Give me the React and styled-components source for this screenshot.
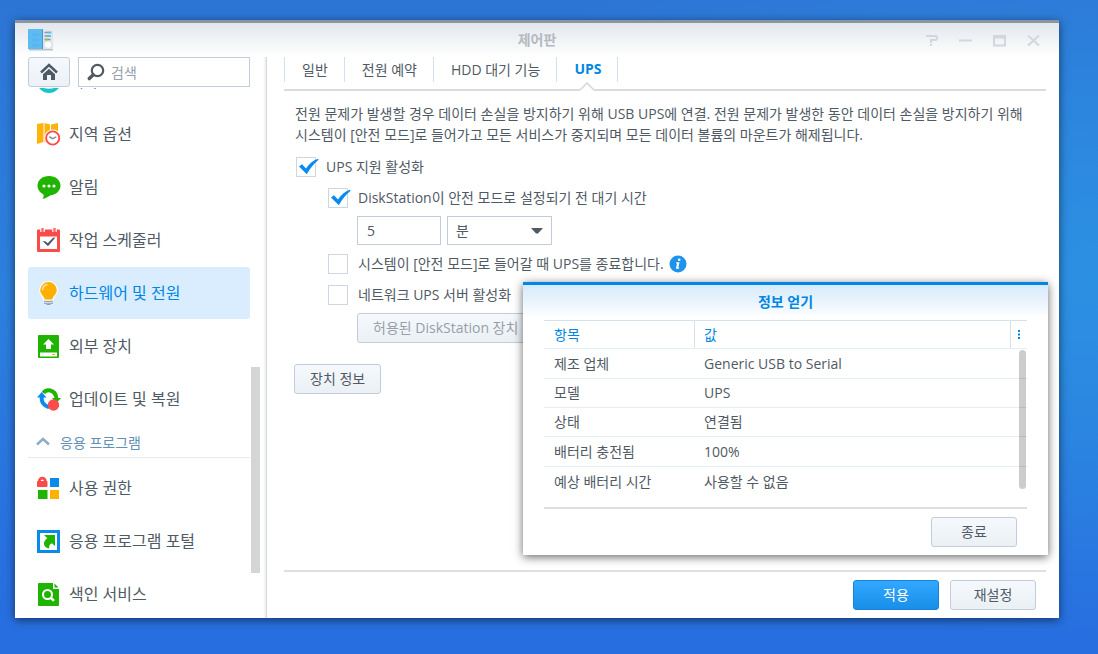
import React from 'react'
import styled, { createGlobalStyle, ThemeProvider } from 'styled-components'

const theme = {
	text: '#505a64',
	muted: '#96a0aa',
	blue: '#0086e5',
	line: '#d7e1eb',
	border: '#c3cdd9',
	font: "'Open Sans', 'Noto Sans CJK KR', sans-serif",
}

const GlobalStyle = createGlobalStyle`
	* {
		box-sizing: border-box;
	}
	body {
		margin: 0;
	}
	body, button, input, select {
		font-family: ${props => props.theme.font};
		font-size: 14px;
		color: ${props => props.theme.text};
	}
`

/* icons */

const AppIcon = () => (
	<svg width="26" height="22" viewBox="0 0 26 22" aria-hidden="true">
		<rect x="1" y="1" width="24" height="20" fill="#dfe5ea" />
		<rect x="1" y="20" width="24" height="1.500" fill="#b9c4ce" />
		<rect x="0" y="0" width="15" height="20" fill="#5fbaf0" />
		<rect x="14" y="0" width="1" height="20" fill="#3d9ad6" />
		<path d="M2 6h9M2 11h9M2 16h9" stroke="#46b4f5" strokeWidth="1" />
		<path d="M2 6h2M2 11h2M2 16h2" stroke="#4fd4f7" strokeWidth="1" />
		<path d="M16.500 3.500h6M16.500 7h6M16.500 10.500h6" stroke="#8b98a3" strokeWidth="1.600" />
		<path d="M19.500 3.500h4M19 7h4" stroke="#4cc4f0" strokeWidth="1.600" />
		<path d="M17 10.500h3" stroke="#8cc63c" strokeWidth="1.600" />
		<circle cx="20" cy="15.700" r="3" fill="#fff" />
	</svg>
)

const HomeIcon = () => (
	<svg width="18" height="18" viewBox="0 0 18 18" aria-hidden="true">
		<path d="M1 9.500 9 2l8 7.500" fill="none" stroke="#505a64" strokeWidth="2.400" />
		<path d="M3 11.300 9 5.800l6 5.500V17h-4v-5H7v5H3z" fill="#505a64" />
	</svg>
)

const SearchIcon = () => (
	<svg width="18" height="18" viewBox="0 0 18 18" aria-hidden="true">
		<circle cx="10.500" cy="7.500" r="5.700" fill="none" stroke="#505a64" strokeWidth="2.200" />
		<path d="M6.300 11.800 2.300 15.600" stroke="#505a64" strokeWidth="3.400" strokeLinecap="round" />
	</svg>
)

const CheckMark = () => (
	<svg width="22" height="18" viewBox="0 0 22 18" aria-hidden="true">
		<path d="M1 8.500 4 6.200 8 10.500C11 6 15 2.500 20 .8l.6 1C16 5.500 12.500 10 8.800 16.200z" fill="#0a8af0" />
	</svg>
)

const ThemeIcon = () => (
	<svg width="24" height="24" viewBox="0 0 24 24" aria-hidden="true">
		<circle cx="12" cy="12" r="12" fill="#1fc8c8" />
		<path d="M3 17q9 6 18 0l-2-5H5z" fill="#b5eef0" />
		<path d="M2 18q10 5 20 0a12 12 0 0 1-20 0z" fill="#1cc4c4" />
	</svg>
)

const RegionIcon = () => (
	<svg width="24" height="24" viewBox="0 0 24 24" aria-hidden="true">
		<path d="M0 2 6.500 1v19L0 22zM7.500 1 13 2.500v19L7.500 20zM14 2.500 21 1v19l-7 1.500z" fill="#ffb30a" />
		<circle cx="15.700" cy="16" r="8.500" fill="#fff" />
		<circle cx="15.700" cy="16" r="6.600" fill="#fff" stroke="#ff4b4b" strokeWidth="1.900" />
		<path d="m12.300 14.700 3.400 2 3.600-1.800" fill="none" stroke="#8a939c" strokeWidth="1.600" />
	</svg>
)

const BubbleIcon = () => (
	<svg width="24" height="24" viewBox="0 0 24 24" aria-hidden="true">
		<path d="M12 1c6.600 0 11.500 4.200 11.500 9.600S19 20 13.500 20.300C11 22 8.500 23.500 5.500 24c1-1.500 1.300-3 1-4.600C3 17.800.5 14.800.5 10.600.5 5.200 5.400 1 12 1z" fill="#1fb400" />
		<circle cx="7" cy="11" r="1.600" fill="#fff" />
		<circle cx="12" cy="11" r="1.600" fill="#fff" />
		<circle cx="17" cy="11" r="1.600" fill="#fff" />
	</svg>
)

const CalendarIcon = () => (
	<svg width="24" height="24" viewBox="0 0 24 24" aria-hidden="true">
		<rect x="0" y="1.500" width="23" height="22.500" rx="1" fill="#fa4b4b" />
		<rect x="3" y="8.500" width="17" height="12.500" fill="#fff" />
		<path d="M5.500 0v4M17.500 0v4" stroke="#fff" strokeWidth="4.500" />
		<path d="M5.500 0v4M17.500 0v4" stroke="#fa6b6b" strokeWidth="2.400" />
		<path d="m5.500 13 3.400.6 1.800 1.700L16 9.800l2.500-.3-7.500 8.800z" fill="#505a64" />
	</svg>
)

const BulbIcon = () => (
	<svg width="24" height="24" viewBox="0 0 24 24" aria-hidden="true">
		<path d="M11.500 0a9.300 9.300 0 0 0-9.300 9.300c0 4 3.500 6 4.500 10.700h9.600c1-4.700 4.500-6.700 4.500-10.700A9.300 9.300 0 0 0 11.500 0z" fill="#fff" />
		<path d="M11.500 1a8.300 8.300 0 0 0-8.300 8.300c0 4 3.700 5.500 4.500 9.200h7.600c.8-3.700 4.500-5.200 4.500-9.200A8.300 8.300 0 0 0 11.500 1z" fill="#ffb000" />
		<path d="M5.500 9.200a6 6 0 0 1 5-5.800" fill="none" stroke="#ffe3a0" strokeWidth="1.500" />
		<path d="M7 20.300h9M7 22.200h9" stroke="#8e979f" strokeWidth="1.100" />
		<path d="M9.500 23.600h4" stroke="#8e979f" />
	</svg>
)

const ExternalIcon = () => (
	<svg width="24" height="24" viewBox="0 0 24 24" aria-hidden="true">
		<rect x="1" y="1" width="21" height="23" rx="1" fill="#1fb400" />
		<path d="M11.500 5 17 10.500h-3V15H9v-4.500H6z" fill="#fff" />
		<rect x="3" y="18.500" width="17" height="4" fill="#fff" />
		<path d="M15 20.500h3" stroke="#ffb000" />
	</svg>
)

const UpdateIcon = () => (
	<svg width="24" height="24" viewBox="0 0 24 24" aria-hidden="true">
		<path d="M6.500 6C9 1.700 18 2 19.500 11" fill="none" stroke="#1fb400" strokeWidth="4" />
		<path d="M15 11h9l-4.500 5z" fill="#1fb400" />
		<path d="M4.800 9C4 15 7 19 12 20.200" fill="none" stroke="#0a8aeb" strokeWidth="4" />
		<path d="M0 10.500 4.800 5l4.700 5.500z" fill="#0a8aeb" />
		<circle cx="16.500" cy="18" r="5.700" fill="#ff4b4b" />
	</svg>
)

const PrivilegeIcon = () => (
	<svg width="24" height="24" viewBox="0 0 24 24" aria-hidden="true">
		<rect x="0" y="5" width="10.500" height="6" rx="1" fill="#fa4b4b" />
		<path d="M2.300 7V5.200a3 3 0 0 1 6 0V7" fill="none" stroke="#fa4b4b" strokeWidth="2.800" />
		<rect x="13" y="2" width="9" height="9" fill="#0a8aeb" />
		<rect x="1" y="14" width="9.500" height="9" fill="#1fb400" />
		<rect x="13" y="14" width="9" height="9" fill="#ffb000" />
	</svg>
)

const PortalIcon = () => (
	<svg width="24" height="24" viewBox="0 0 24 24" aria-hidden="true">
		<rect x="1.500" y="2.500" width="20" height="20" fill="#fff" stroke="#0a8aeb" strokeWidth="3" />
		<path d="M7 6h11v11l-3.200-2.800c-2.300 1-2.900 2.900-2.600 5.300C7 18.800 4.500 13.500 10.300 9.300z" fill="#1fb400" />
	</svg>
)

const IndexIcon = () => (
	<svg width="24" height="24" viewBox="0 0 24 24" aria-hidden="true">
		<path d="M1 2a1 1 0 0 1 1-1h14v6h6v16a1 1 0 0 1-1 1H2a1 1 0 0 1-1-1z" fill="#1fb400" />
		<path d="m17.500 1.500 4 4h-4z" fill="#1fb400" />
		<circle cx="10.500" cy="12.500" r="4.500" fill="none" stroke="#fff" strokeWidth="2" />
		<path d="m13.500 15.500 3.500 3.300" stroke="#fff" strokeWidth="2.500" />
	</svg>
)

const ChevronUp = () => (
	<svg width="14" height="9" viewBox="0 0 14 9" aria-hidden="true">
		<path d="M1 7.500 7 2l6 5.500" fill="none" stroke="#8fabc3" strokeWidth="2.400" />
	</svg>
)

const InfoIcon = () => (
	<svg width="18" height="18" viewBox="0 0 18 18" role="img" aria-label="정보">
		<circle cx="9" cy="9" r="8.500" fill="#1f93ea" />
		<path d="M7.300 7.200h3.200L9.300 12.400h1l-.3 1.300H6.900l1.100-5.200h-.9z" fill="#fff" />
		<circle cx="10.200" cy="4.800" r="1.300" fill="#fff" />
	</svg>
)

const windowIcons = {
	'도움말': <path d="M1 2h9.500q1.500 0 1.500 1.500v1q0 1.500-1.500 1.500H6v3M6 10v2" />,
	'최소화': <path d="M0 6.500h13" />,
	'최대화': <path d="M1 2h11v9.500H1zM1 3.500h11" />,
	'닫기': <path d="m1 1.500 11 10M12 1.500l-11 10" />,
}

/* window frame */

const Desktop = styled.div`
	display: flex;
	min-height: 100vh;
	padding: 20px 39px 36px 15px;
	background:
		radial-gradient(ellipse 70% 55% at 100% 42%, #2c90e2 0%, rgba(44, 144, 226, 0) 100%),
		linear-gradient(#2d75d5 0%, #2c80de 45%, #2870e0 85%, #276fe0 100%);
`

const Window = styled.div`
	position: relative;
	flex: 1;
	display: flex;
	flex-direction: column;
	background: #fff;
	border-top: 3px solid #8a95a1;
	box-shadow: 0 2px 9px rgba(0, 0, 0, 0.55);
`

const TitleBar = styled.header`
	display: grid;
	grid-template-columns: 1fr auto 1fr;
	align-items: center;
	height: 34px;
	padding: 0 13px;
	background: linear-gradient(#e2e7ed, #fff);
	svg {
		display: block;
	}
`

const WindowTitle = styled.h1`
	margin: 0;
	font-size: 14px;
	line-height: 20px;
	font-weight: bold;
	color: #b4bac2;
`

const WindowButtons = styled.div`
	display: flex;
	justify-content: flex-end;
	gap: 20px;
	padding-right: 5px;
`

const IconButton = styled.button`
	padding: 0;
	border: 0;
	background: none;
	svg {
		fill: none;
		stroke: #d3d7dc;
		stroke-width: 2;
	}
`

const Body = styled.div`
	flex: 1;
	display: flex;
	min-height: 0;
`

/* sidebar */

const Sidebar = styled.aside`
	display: flex;
	flex-direction: column;
	flex: none;
	width: 252px;
	padding-left: 13px;
	border-right: 1px solid #d5d8dc;
	box-shadow: inset -3px 0 3px -2px #e4e6e9;
`

const SearchRow = styled.div`
	display: flex;
	gap: 8px;
	padding-right: 16px;
`

const HomeButton = styled.button`
	flex: none;
	display: flex;
	align-items: center;
	justify-content: center;
	width: 42px;
	height: 30px;
	padding: 0;
	border: 1px solid ${props => props.theme.border};
	border-radius: 3px;
	background: linear-gradient(#f5f9fd, #ebf1f6);
`

const SearchBox = styled.label`
	flex: 1;
	display: flex;
	align-items: center;
	gap: 6px;
	min-width: 0;
	height: 30px;
	padding: 0 8px;
	border: 1px solid ${props => props.theme.border};
	svg {
		flex: none;
	}
	input {
		flex: 1;
		min-width: 0;
		padding: 0;
		border: 0;
		outline: 0;
		background: none;
	}
	input::placeholder {
		color: ${props => props.theme.muted};
		opacity: 1;
	}
`

const ScrollArea = styled.div`
	position: relative;
	flex: 1;
	display: flex;
	min-height: 0;
	margin-top: 1px;
	padding-right: 6px;
	overflow: hidden;
`

const NavList = styled.nav`
	position: absolute;
	inset: 0 16px -2px 0;
	display: flex;
	flex-direction: column;
	justify-content: flex-end;
	gap: 1px;
`

const NavItem = styled.a`
	flex: none;
	display: flex;
	align-items: center;
	gap: 8px;
	height: 52px;
	padding-left: 9px;
	border-radius: 3px;
	font-size: 16px;
	line-height: 24px;
	text-decoration: none;
	color: ${props => (props.$active ? props.theme.blue : props.theme.text)};
	background: ${props => (props.$active ? '#d9edff' : 'none')};
`

const NavSection = styled.button`
	flex: none;
	display: flex;
	align-items: center;
	gap: 10px;
	height: 32px;
	margin-bottom: 3px;
	padding: 0 0 0 8px;
	border: 0;
	border-bottom: 1px solid #e6eaee;
	background: none;
	color: #6391b5;
`

const SideTrack = styled.div`
	display: flex;
	flex-direction: column;
	justify-content: flex-end;
	width: 9px;
	margin-left: auto;
	padding-bottom: 45px;
`

const SideThumb = styled.div`
	height: 206px;
	background: #d3d5d7;
`

/* main panel */

const Main = styled.main`
	flex: 1;
	display: flex;
	flex-direction: column;
	min-width: 0;
	padding: 0 13px 0 17px;
`

const Tabs = styled.nav`
	display: flex;
	height: 34px;
	padding-bottom: 7px;
	border-bottom: 2px solid #d9dbdd;
`

const Tab = styled.button`
	position: relative;
	padding: 0 16px 2px 17px;
	border: 0;
	border-left: 1px solid ${props => props.theme.line};
	background: none;
	font-weight: ${props => (props.$active ? 'bold' : 'normal')};
	color: ${props => (props.$active ? props.theme.blue : props.theme.text)};
	&:last-of-type {
		border-right: 1px solid ${props => props.theme.line};
	}
	svg {
		position: absolute;
		left: 50%;
		bottom: -9px;
		margin-left: -7px;
	}
`

const Content = styled.div`
	flex: 1;
	padding: 12px 10px 0;
`

const Description = styled.p`
	margin: 0;
	padding-left: 1px;
	line-height: 21px;
	word-break: keep-all;
`

const Options = styled.div`
	display: flex;
	flex-direction: column;
	gap: 7px;
	padding: 10px 0 21px 2px;
`

const Option = styled.div`
	display: flex;
	align-items: center;
	gap: 10px;
	height: 24px;
	margin-left: ${props => (props.$nested ? '32px' : '0')};
	label {
		line-height: 20px;
		white-space: nowrap;
	}
`

const CheckBox = styled.span`
	position: relative;
	display: flex;
	input {
		appearance: none;
		width: 20px;
		height: 20px;
		margin: 0;
		border: 1px solid #cdd7e1;
		background: #fff;
	}
	svg {
		position: absolute;
		left: 2px;
		top: 1px;
		pointer-events: none;
	}
`

const InfoWrap = styled.span`
	display: flex;
	margin-left: -5px;
`

const Fields = styled.div`
	display: flex;
	gap: 6px;
	margin: -1px 0 0 61px;
`

const NumberInput = styled.input`
	width: 84px;
	height: 29px;
	padding: 0 9px;
	border: 1px solid ${props => props.theme.border};
`

const SelectBox = styled.span`
	position: relative;
	display: flex;
	select {
		appearance: none;
		width: 105px;
		height: 29px;
		padding: 0 8px;
		border: 1px solid ${props => props.theme.border};
		border-radius: 0;
		background: #fff;
	}
	svg {
		position: absolute;
		right: 9px;
		top: 12px;
		pointer-events: none;
	}
`

const Button = styled.button`
	min-width: 86px;
	height: 30px;
	padding: 0 15px;
	border: 1px solid ${props => (props.$primary ? '#1583dc' : props.theme.border)};
	border-radius: 3px;
	background: ${props => (props.$primary ? 'linear-gradient(#32a8ff, #188fe8)' : 'linear-gradient(#f5f9fd, #ebf0f5)')};
	color: ${props => (props.$primary ? '#fff' : props.theme.text)};
	line-height: 20px;
	white-space: nowrap;
	&:disabled {
		color: ${props => props.theme.muted};
	}
`

const AllowedRow = styled.div`
	display: flex;
	margin: -1px 0 0 61px;
`

const Footer = styled.footer`
	display: flex;
	justify-content: flex-end;
	gap: 11px;
	padding: 8px 10px;
	border-top: 2px solid #dddfe1;
`

/* dialog */

const Dialog = styled.section`
	position: absolute;
	right: 11px;
	bottom: 63px;
	width: 525px;
	padding: 0 21px;
	border-top: 3px solid ${props => props.theme.blue};
	background: linear-gradient(#d6eafb, #fff 34px);
	box-shadow: 0 2px 9px rgba(0, 0, 0, 0.6);
	h2 {
		margin: 0;
		height: 35px;
		font-size: 14px;
		line-height: 34px;
		text-align: center;
		color: ${props => props.theme.blue};
	}
`

const TableArea = styled.div`
	position: relative;
	height: 189px;
	border-bottom: 2px solid #dddfe1;
`

const Table = styled.table`
	width: 100%;
	table-layout: fixed;
	border-collapse: separate;
	border-spacing: 0;
	th {
		height: 29px;
		padding: 0 10px;
		border-top: 1px solid ${props => props.theme.line};
		border-bottom: 1px solid #e6edf3;
		font-weight: normal;
		line-height: 20px;
		text-align: left;
		color: ${props => props.theme.blue};
	}
	th + th {
		border-left: 1px solid ${props => props.theme.line};
		padding-left: 9px;
	}
	th:last-child {
		padding: 0 0 0 7px;
	}
	th svg {
		display: block;
	}
	td {
		height: 29px;
		padding: 0 10px;
		border-bottom: 1px solid #e6edf3;
		line-height: 20px;
	}
	tr:nth-child(3n + 1) td {
		height: 30px;
	}
	tr:last-child td {
		border-bottom: 0;
	}
`

const TableThumb = styled.div`
	position: absolute;
	right: 1px;
	top: 30px;
	width: 7px;
	height: 139px;
	border-radius: 4px;
	background: rgba(0, 0, 0, 0.2);
`

const DialogFooter = styled.div`
	display: flex;
	justify-content: flex-end;
	padding: 8px 10px;
`

const systemItems = [
	{ label: '테마', Icon: ThemeIcon },
	{ label: '지역 옵션', Icon: RegionIcon },
	{ label: '알림', Icon: BubbleIcon },
	{ label: '작업 스케줄러', Icon: CalendarIcon },
	{ label: '하드웨어 및 전원', Icon: BulbIcon, active: true },
	{ label: '외부 장치', Icon: ExternalIcon },
	{ label: '업데이트 및 복원', Icon: UpdateIcon },
]

const appItems = [
	{ label: '사용 권한', Icon: PrivilegeIcon },
	{ label: '응용 프로그램 포털', Icon: PortalIcon },
	{ label: '색인 서비스', Icon: IndexIcon },
]

const tabs = ['일반', '전원 예약', 'HDD 대기 기능', 'UPS']

const deviceInfo = [
	['제조 업체', 'Generic USB to Serial'],
	['모델', 'UPS'],
	['상태', '연결됨'],
	['배터리 충전됨', '100%'],
	['예상 배터리 시간', '사용할 수 없음'],
]

const NavItems = ({ items }) =>
	items.map(({ label, Icon, active }) => (
		<NavItem key={label} href="#" $active={active}>
			<Icon />
			{label}
		</NavItem>
	))

const CheckOption = ({ id, label, checked, nested, children }) => {
	const [on, setOn] = React.useState(Boolean(checked))
	return (
		<Option $nested={nested}>
			<CheckBox>
				<input id={id} type="checkbox" checked={on} onChange={e => setOn(e.target.checked)} />
				{on && <CheckMark />}
			</CheckBox>
			<label htmlFor={id}>{label}</label>
			{children}
		</Option>
	)
}

const InfoDialog = () => (
	<Dialog role="dialog" aria-labelledby="info-title">
		<h2 id="info-title">정보 얻기</h2>
		<TableArea>
			<Table>
				<colgroup>
					<col style={{ width: 150 }} />
					<col />
					<col style={{ width: 17 }} />
				</colgroup>
				<thead>
					<tr>
						<th>항목</th>
						<th>값</th>
						<th aria-label="열">
							<svg width="2" height="9" viewBox="0 0 2 9">
								<path d="M0 0h2v2H0zM0 3.500h2v2H0zM0 7h2v2H0z" fill="#0086e5" />
							</svg>
						</th>
					</tr>
				</thead>
				<tbody>
					{deviceInfo.map(([name, value]) => (
						<tr key={name}>
							<td>{name}</td>
							<td colSpan={2}>{value}</td>
						</tr>
					))}
				</tbody>
			</Table>
			<TableThumb />
		</TableArea>
		<DialogFooter>
			<Button type="button">종료</Button>
		</DialogFooter>
	</Dialog>
)

const App = () => (
	<ThemeProvider theme={theme}>
		<GlobalStyle />
		<Desktop>
			<Window>
				<TitleBar>
					<AppIcon />
					<WindowTitle>제어판</WindowTitle>
					<WindowButtons>
						{Object.entries(windowIcons).map(([name, icon]) => (
							<IconButton key={name} type="button" aria-label={name}>
								<svg width="14" height="13" viewBox="0 0 14 13">{icon}</svg>
							</IconButton>
						))}
					</WindowButtons>
				</TitleBar>
				<Body>
					<Sidebar>
						<SearchRow>
							<HomeButton type="button" aria-label="홈">
								<HomeIcon />
							</HomeButton>
							<SearchBox>
								<SearchIcon />
								<input type="text" placeholder="검색" aria-label="검색" />
							</SearchBox>
						</SearchRow>
						<ScrollArea>
							<NavList>
								<NavItems items={systemItems} />
								<NavSection type="button">
									<ChevronUp />
									응용 프로그램
								</NavSection>
								<NavItems items={appItems} />
							</NavList>
							<SideTrack>
								<SideThumb />
							</SideTrack>
						</ScrollArea>
					</Sidebar>
					<Main>
						<Tabs>
							{tabs.map(tab => (
								<Tab key={tab} type="button" $active={tab === 'UPS'}>
									{tab}
									{tab === 'UPS' && (
										<svg width="14" height="9" viewBox="0 0 14 9" aria-hidden="true">
											<path d="M0 9V8L7 1l7 7v1z" fill="#fff" />
											<path d="M0 8 7 1l7 7" fill="none" stroke="#d5d8db" strokeWidth="1.500" />
										</svg>
									)}
								</Tab>
							))}
						</Tabs>
						<Content>
							<Description>
								전원 문제가 발생할 경우 데이터 손실을 방지하기 위해 USB UPS에 연결. 전원 문제가 발생한 동안 데이터 손실을 방지하기 위해
								시스템이 [안전 모드]로 들어가고 모든 서비스가 중지되며 모든 데이터 볼륨의 마운트가 해제됩니다.
							</Description>
							<Options>
								<CheckOption id="ups" label="UPS 지원 활성화" checked />
								<CheckOption id="wait" label="DiskStation이 안전 모드로 설정되기 전 대기 시간" checked nested />
								<Fields>
									<NumberInput type="text" defaultValue="5" aria-label="대기 시간" />
									<SelectBox>
										<select aria-label="시간 단위" defaultValue="분">
											<option>분</option>
											<option>초</option>
										</select>
										<svg width="12" height="6" viewBox="0 0 12 6" aria-hidden="true">
											<path d="M0 0h12L7 5.500H5z" fill="#505a64" />
										</svg>
									</SelectBox>
								</Fields>
								<CheckOption id="shutdown" label="시스템이 [안전 모드]로 들어갈 때 UPS를 종료합니다." nested>
									<InfoWrap><InfoIcon /></InfoWrap>
								</CheckOption>
								<CheckOption id="server" label="네트워크 UPS 서버 활성화" nested />
								<AllowedRow>
									<Button type="button" disabled>허용된 DiskStation 장치</Button>
								</AllowedRow>
							</Options>
							<Button type="button">장치 정보</Button>
						</Content>
						<Footer>
							<Button type="button" $primary>적용</Button>
							<Button type="button">재설정</Button>
						</Footer>
					</Main>
				</Body>
				<InfoDialog />
			</Window>
		</Desktop>
	</ThemeProvider>
)

export default App
